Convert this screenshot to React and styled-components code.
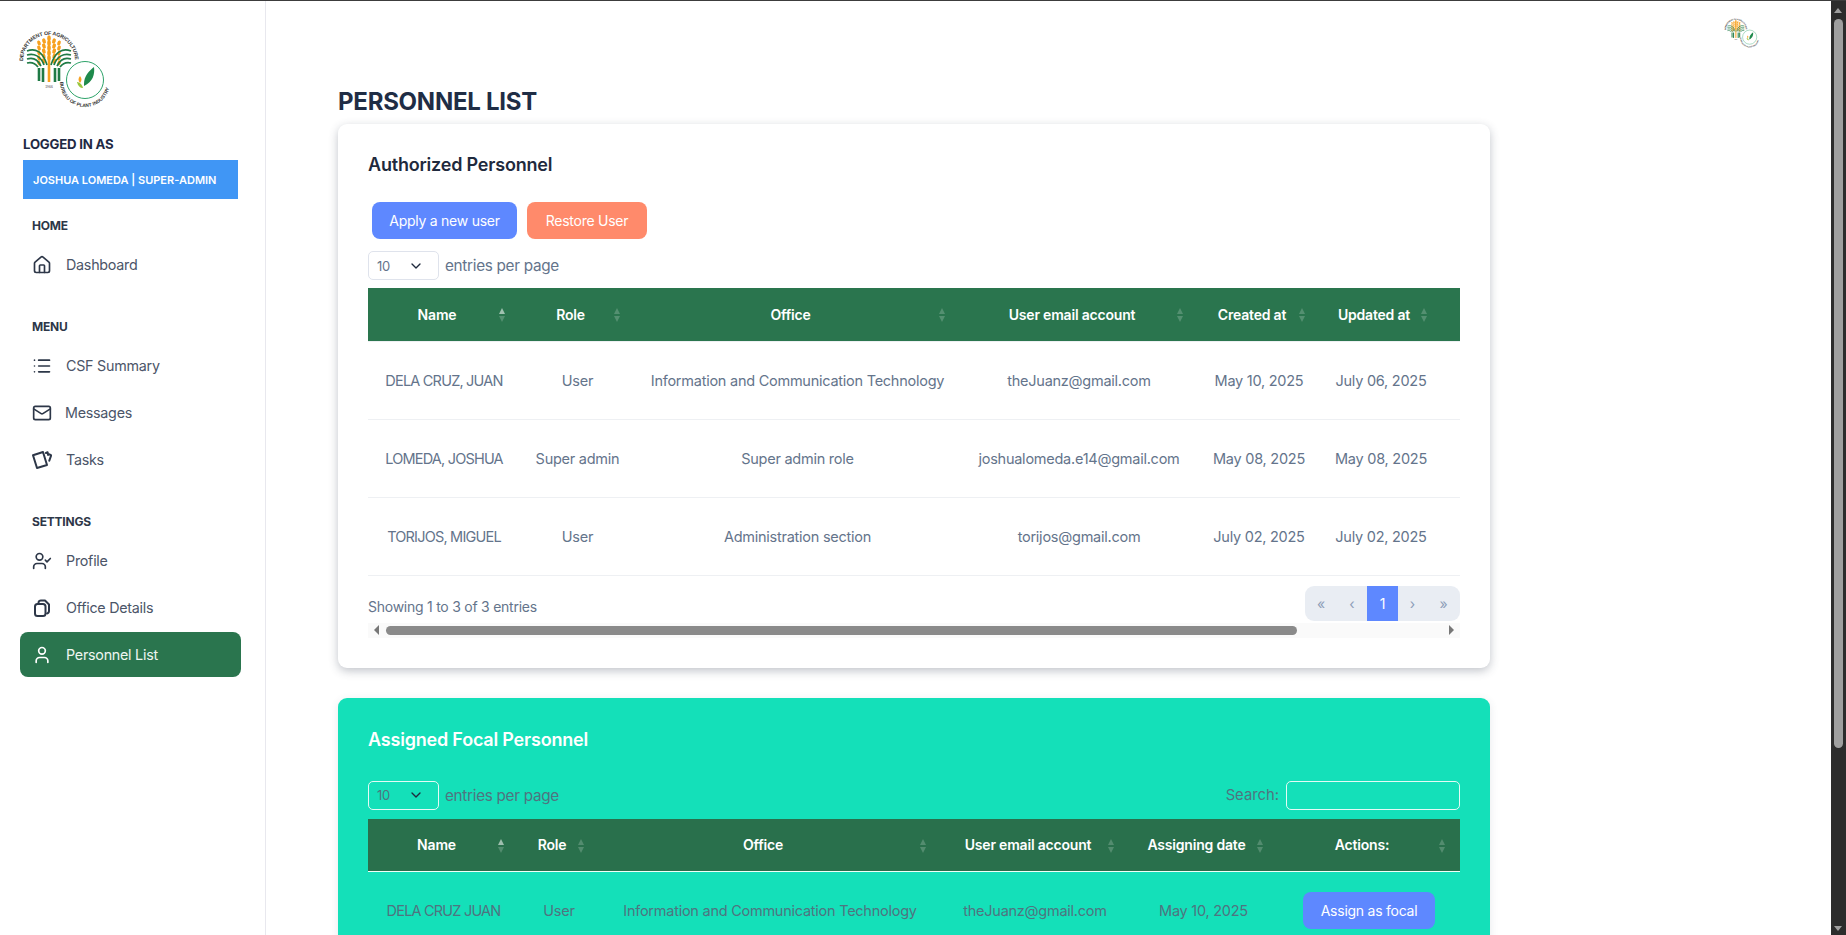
import React from 'react'
import styled, { createGlobalStyle } from 'styled-components'
import { Home, List, Mail, UserCheck, User, ChevronDown } from 'lucide-react'

const GlobalStyle = createGlobalStyle`
  html, body { margin: 0; padding: 0; background: #fff; height: 100%; overflow: hidden; }
  body { font-family: Inter, "Noto Sans", sans-serif; color: #1f2a44; }
  * { box-sizing: border-box; }
`

const Page = styled.div`
  position: relative;
  height: 935px;
  overflow: hidden;
  display: flex;
  border-top: 1px solid #3c3c3c;
`
const Sidebar = styled.aside`
  width: 266px;
  flex: none;
  border-right: 1px solid #e8e8ee;
  padding: 29px 0 0 0;
`
const LogoBox = styled.div`
  padding-left: 18px;
  height: 80px;
`
const LoggedLabel = styled.div`
  margin: 26px 0 0 23px;
  font-size: 13.2px;
  line-height: 16px;
  font-weight: 700;
  letter-spacing: -0.2px;
  color: #1f2a44;
`
const UserBanner = styled.div`
  margin: 8px 0 19px 23px;
  width: 215px;
  height: 39px;
  padding-left: 10px;
  display: flex;
  align-items: center;
  background: #4096f5;
  color: #fff;
  font-size: 11px;
  font-weight: 600;
  white-space: nowrap;
`
const SectionLabel = styled.div`
  margin: ${p => (p.$first ? 0 : '31px')} 0 7px 32px;
  font-size: 12px;
  line-height: 16px;
  font-weight: 700;
  letter-spacing: -0.2px;
  color: #2d3748;
`
const NavItem = styled.div`
  display: flex;
  align-items: center;
  margin: ${p => (p.$active ? '1px' : 0)} 0 ${p => (p.$active ? '1px' : 0)} ${p => (p.$active ? '20px' : 0)};
  width: ${p => (p.$active ? '221px' : 'auto')};
  height: ${p => (p.$active ? '45px' : '47px')};
  padding-left: ${p => (p.$active ? '12px' : '32px')};
  border-radius: 8px;
  background: ${p => (p.$active ? '#2a754e' : 'transparent')};
  color: ${p => (p.$active ? '#eef6f1' : '#4b5568')};
  font-size: 14.3px;
  letter-spacing: -0.25px;
  & > svg { flex: none; color: ${p => (p.$active ? '#fff' : '#2d3748')}; }
`
const NavText = styled.span`
  margin-left: ${p => p.$left || 14}px;
`
const Main = styled.main`
  flex: 1;
  min-width: 0;
  padding-left: 72px;
`
const TopBar = styled.div`
  display: flex;
  justify-content: flex-end;
  padding: 17px 86px 0 0;
  height: 85px;
`
const Title = styled.h1`
  margin: 0 0 6px 0;
  height: 32px;
  line-height: 32px;
  font-size: 24px;
  font-weight: 700;
  letter-spacing: -0.25px;
  color: #1f2d45;
`
const Card = styled.section`
  width: 1152px;
  margin-bottom: 30px;
  padding: 30px;
  border-radius: 9px;
  background: ${p => (p.$teal ? '#14e0b9' : '#fff')};
  box-shadow: ${p => (p.$teal ? '0 2px 8px rgba(60,70,90,.12)' : '0 3px 10px rgba(50,60,80,.3)')};
`
const CardTitle = styled.h2`
  margin: ${p => (p.$light ? '1px' : 0)} 0 0 0;
  height: 22px;
  line-height: 22px;
  font-size: 18px;
  font-weight: 600;
  letter-spacing: -0.2px;
  color: ${p => (p.$light ? '#fff' : '#1f2a3d')};
`
const ButtonRow = styled.div`
  display: flex;
  gap: 10px;
  margin: 26px 0 12px 4px;
`
const ActionButton = styled.button`
  height: 37px;
  width: ${p => p.$w}px;
  padding: 0;
  border: none;
  border-radius: 8px;
  background: ${p => p.$bg || '#5e88ff'};
  color: #fff;
  font-family: inherit;
  font-size: 14px;
  letter-spacing: -0.25px;
`
const Controls = styled.div`
  display: flex;
  align-items: center;
  justify-content: space-between;
  height: 29px;
  margin: ${p => (p.$teal ? '30px 0 9px' : '0 0 8px')};
`
const EntriesGroup = styled.div`
  display: flex;
  align-items: center;
  gap: 6px;
  font-size: 15.3px;
  letter-spacing: -0.3px;
  color: ${p => (p.$teal ? '#4f7480' : '#64748b')};
`
const SelectBox = styled.div`
  width: 71px;
  height: 29px;
  display: flex;
  align-items: center;
  justify-content: space-between;
  padding: 0 14px 0 8px;
  border: 1px solid ${p => (p.$teal ? '#e4fbf6' : '#dfe3ec')};
  border-radius: 5px;
  font-size: 13px;
  color: ${p => (p.$teal ? '#4f7480' : '#64748b')};
  & > svg { color: #1f2a3d; }
`
const SearchGroup = styled.label`
  display: flex;
  align-items: center;
  gap: 7px;
  font-size: 14.8px;
  color: #4f7480;
`
const SearchInput = styled.input`
  width: 174px;
  height: 29px;
  border: 1px solid #e4fbf6;
  border-radius: 5px;
  background: transparent;
  outline: none;
`
const TableClip = styled.div`
  width: 1092px;
  overflow: hidden;
`
const Table = styled.table`
  width: ${p => p.$w}px;
  table-layout: fixed;
  border-collapse: collapse;
`
const Th = styled.th`
  position: relative;
  height: 53px;
  padding: 0 24px 0 10px;
  background: ${p => (p.$teal ? '#29704c' : '#2a754e')};
  border-bottom: 1px solid ${p => (p.$teal ? '#f0fff9' : '#eef0f3')};
  color: #fff;
  font-size: 14px;
  font-weight: 600;
  letter-spacing: -0.2px;
  white-space: nowrap;
  &::before, &::after {
    content: '';
    position: absolute;
    right: 15px;
    width: 0;
    height: 0;
    border-left: 3.5px solid transparent;
    border-right: 3.5px solid transparent;
  }
  &::before {
    top: 20px;
    border-bottom: 6px solid rgba(255, 255, 255, ${p => (p.$sorted ? 0.55 : 0.2)});
  }
  &::after {
    top: 28px;
    border-top: 6px solid rgba(255, 255, 255, 0.2);
  }
`
const ThBlank = styled.th`
  background: #2a754e;
  border-bottom: 1px solid #eef0f3;
`
const Td = styled.td`
  height: 78px;
  padding: 0 4px;
  text-align: center;
  border-bottom: ${p => (p.$teal ? 'none' : '1px solid #eef0f3')};
  color: ${p => (p.$teal ? '#4f7480' : '#64748b')};
  font-size: 14.5px;
  letter-spacing: ${p => (p.$caps ? '-0.8px' : '-0.25px')};
  white-space: nowrap;
`
const TableFooter = styled.div`
  display: flex;
  justify-content: space-between;
  align-items: flex-start;
  margin-top: 10px;
  height: 36px;
`
const ShowingText = styled.div`
  margin-top: 12px;
  font-size: 14px;
  letter-spacing: -0.25px;
  color: #64748b;
`
const Pagination = styled.div`
  display: flex;
  height: 35px;
  border-radius: 9px;
  overflow: hidden;
  background: #e9edf3;
`
const PageCell = styled.div`
  width: ${p => p.$w}px;
  display: flex;
  align-items: center;
  justify-content: center;
  font-size: 14px;
  background: ${p => (p.$active ? '#5e88ff' : 'transparent')};
  color: ${p => (p.$active ? '#fff' : '#8d9db8')};
`
const HScroll = styled.div`
  position: relative;
  height: 15px;
  margin-top: 1px;
  display: flex;
  align-items: center;
  justify-content: space-between;
  padding: 0 6px;
  background: #fafafa;
`
const HThumb = styled.div`
  position: absolute;
  left: 18px;
  top: 3px;
  width: 911px;
  height: 9px;
  border-radius: 5px;
  background: #8a8a8a;
`
const SideArrow = styled.div`
  width: 0;
  height: 0;
  border-top: 5px solid transparent;
  border-bottom: 5px solid transparent;
  ${p => (p.$right ? 'border-left: 5px solid #777;' : 'border-right: 5px solid #777;')}
`
const ScrollBar = styled.div`
  position: absolute;
  top: 0;
  right: 0;
  bottom: 0;
  width: 15px;
  background: #2c2c2c;
`
const ScrollThumb = styled.div`
  position: absolute;
  left: 3px;
  top: 18px;
  width: 9px;
  height: 729px;
  border-radius: 5px;
  background: #9f9f9f;
`
const ScrollArrow = styled.div`
  position: absolute;
  left: 3px;
  width: 0;
  height: 0;
  border-left: 4.5px solid transparent;
  border-right: 4.5px solid transparent;
  ${p => (p.$down
    ? 'bottom: 4px; border-top: 5px solid #9f9f9f;'
    : 'top: 7px; border-bottom: 5px solid #9f9f9f;')}
`

function Logo({ width = 94, id }) {
  const grains = []
  for (let i = 0; i < 5; i++) {
    const y = 11 + i * 5
    const spread = 5 + i * 0.6
    grains.push(<ellipse key={'l2' + i} cx={31 - spread * 2 + i * 1.2} cy={y + 2} rx="1.7" ry="2.6" fill="#f7a11f" transform={`rotate(-20 ${31 - spread * 2 + i * 1.2} ${y + 2})`} />)
    grains.push(<ellipse key={'l' + i} cx={31 - spread + i * 0.5} cy={y} rx="1.8" ry="2.7" fill="#f7a11f" transform={`rotate(-18 ${31 - spread + i * 0.5} ${y})`} />)
    grains.push(<ellipse key={'r' + i} cx={31 + spread - i * 0.5} cy={y} rx="1.8" ry="2.7" fill="#f7a11f" transform={`rotate(18 ${31 + spread - i * 0.5} ${y})`} />)
    grains.push(<ellipse key={'r2' + i} cx={31 + spread * 2 - i * 1.2} cy={y + 2} rx="1.7" ry="2.6" fill="#f7a11f" transform={`rotate(20 ${31 + spread * 2 - i * 1.2} ${y + 2})`} />)
    grains.push(<ellipse key={'c' + i} cx={31} cy={y - 3} rx="1.8" ry="2.7" fill="#f7a11f" />)
  }
  return (
    <svg width={width} height={width * 80 / 94} viewBox="0 0 94 80">
      <defs>
        <path id={id + 'a'} d="M5 31 A26 26 0 0 1 57 31" />
        <path id={id + 'b'} d="M42 52 A25 25 0 0 0 92 52" />
      </defs>
      <text fontFamily="Liberation Sans, sans-serif" fontSize="5.2" fontWeight="700" fill="#333" textLength="80">
        <textPath href={`#${id}a`}>DEPARTMENT OF AGRICULTURE</textPath>
      </text>
      {grains}
      <path d="M31 8v44" stroke="#f7a11f" strokeWidth="2.6" />
      <path d="M9 21c8-3 16 0 20 14M9 25c7-2 14 1 17 10M9 29c6-2 11 1 14 7M9 33c4-1 8 0 11 4M53 21c-8-3-16 0-20 14M53 25c-7-2-14 1-17 10M53 29c-6-2-11 1-14 7M53 33c-4-1-8 0-11 4" fill="none" stroke="#1f7a45" strokeWidth="1.7" />
      <path d="M21 38v13M25 38v14M37 38v14M41 38v13" stroke="#1f7a45" strokeWidth="2.6" />
      <text x="31" y="58" fontSize="3.4" textAnchor="middle" fontFamily="Liberation Sans, sans-serif" fill="#444">1966</text>
      <circle cx="67" cy="50" r="18.5" fill="#fff" stroke="#2ea36a" strokeWidth="1" />
      <path d="M66 65V54C66 46 71 41 76 37c1 7-1 15-10 19z" fill="#1f8a4c" />
      <path d="M62 46c-2 2-2 5 0 7 2-2 2-5 0-7z" fill="#f7a11f" />
      <path d="M59 52c2 0 5 2 6 6-3 0-5-2-6-6z" fill="#9ac63c" />
      <text fontFamily="Liberation Sans, sans-serif" fontSize="4.8" fontWeight="700" fill="#333" textLength="72">
        <textPath href={`#${id}b`}>BUREAU OF PLANT INDUSTRY</textPath>
      </text>
    </svg>
  )
}

function CardsIcon() {
  return (
    <svg width="20" height="20" viewBox="0 0 20 20" fill="none" stroke="currentColor" strokeWidth="2" strokeLinecap="round" strokeLinejoin="round">
      <path d="M1 5.3 11 2l4 13-10 3z" />
      <path d="M14 3l1.6-.8.5 2.8M17.5 4.3l1.7 1-1.9 5.4" />
    </svg>
  )
}

function PagesIcon() {
  return (
    <svg width="20" height="20" viewBox="0 0 20 20" fill="none" stroke="currentColor" strokeWidth="2" strokeLinecap="round" strokeLinejoin="round">
      <rect x="3" y="6" width="10.5" height="12" rx="2.5" />
      <path d="M6.5 4.5A2.5 2.5 0 0 1 9 2.5h4l4 4v6.5a2.5 2.5 0 0 1-2 2.4" />
    </svg>
  )
}

const homeItems = [{ label: 'Dashboard', icon: <Home size={20} strokeWidth={2} /> }]
const menuItems = [
  { label: 'CSF Summary', icon: <List size={20} strokeWidth={2} /> },
  { label: 'Messages', icon: <Mail size={20} strokeWidth={2} />, left: 13 },
  { label: 'Tasks', icon: <CardsIcon />, left: 14 },
]
const settingItems = [
  { label: 'Profile', icon: <UserCheck size={20} strokeWidth={2} /> },
  { label: 'Office Details', icon: <PagesIcon /> },
  { label: 'Personnel List', icon: <User size={20} strokeWidth={2} />, active: true },
]

const authColumns = [
  { title: 'Name', width: 152, sorted: true },
  { title: 'Role', width: 115 },
  { title: 'Office', width: 325 },
  { title: 'User email account', width: 238 },
  { title: 'Created at', width: 122 },
  { title: 'Updated at', width: 122 },
]
const authRows = [
  ['DELA CRUZ, JUAN', 'User', 'Information and Communication Technology', 'theJuanz@gmail.com', 'May 10, 2025', 'July 06, 2025'],
  ['LOMEDA, JOSHUA', 'Super admin', 'Super admin role', 'joshualomeda.e14@gmail.com', 'May 08, 2025', 'May 08, 2025'],
  ['TORIJOS, MIGUEL', 'User', 'Administration section', 'torijos@gmail.com', 'July 02, 2025', 'July 02, 2025'],
]
const focalColumns = [
  { title: 'Name', width: 151, sorted: true },
  { title: 'Role', width: 80 },
  { title: 'Office', width: 342 },
  { title: 'User email account', width: 188 },
  { title: 'Assigning date', width: 149 },
  { title: 'Actions:', width: 182 },
]

function NavGroup({ items }) {
  return items.map(item => (
    <NavItem key={item.label} $active={item.active}>
      {item.icon}
      <NavText $left={item.left}>{item.label}</NavText>
    </NavItem>
  ))
}

function EntriesSelect({ teal }) {
  return (
    <EntriesGroup $teal={teal}>
      <SelectBox $teal={teal}>10<ChevronDown size={16} /></SelectBox>
      entries per page
    </EntriesGroup>
  )
}

export default function App() {
  return (
    <Page>
      <GlobalStyle />
      <Sidebar>
        <LogoBox><Logo id="side" /></LogoBox>
        <LoggedLabel>LOGGED IN AS</LoggedLabel>
        <UserBanner>JOSHUA LOMEDA | SUPER-ADMIN</UserBanner>
        <SectionLabel $first>HOME</SectionLabel>
        <NavGroup items={homeItems} />
        <SectionLabel>MENU</SectionLabel>
        <NavGroup items={menuItems} />
        <SectionLabel>SETTINGS</SectionLabel>
        <NavGroup items={settingItems} />
      </Sidebar>
      <Main>
        <TopBar><Logo id="top" width={36} /></TopBar>
        <Title>PERSONNEL LIST</Title>
        <Card>
          <CardTitle>Authorized Personnel</CardTitle>
          <ButtonRow>
            <ActionButton $w={145}>Apply a new user</ActionButton>
            <ActionButton $w={120} $bg="#ff8a6b">Restore User</ActionButton>
          </ButtonRow>
          <Controls><EntriesSelect /></Controls>
          <TableClip>
            <Table $w={1274}>
              <colgroup>
                {authColumns.map(c => <col key={c.title} width={c.width} />)}
                <col width={200} />
              </colgroup>
              <thead>
                <tr>
                  {authColumns.map(c => <Th key={c.title} $sorted={c.sorted}>{c.title}</Th>)}
                  <ThBlank />
                </tr>
              </thead>
              <tbody>
                {authRows.map(row => (
                  <tr key={row[0]}>
                    {row.map((cell, i) => <Td key={cell} $caps={i === 0}>{cell}</Td>)}
                    <Td />
                  </tr>
                ))}
              </tbody>
            </Table>
          </TableClip>
          <TableFooter>
            <ShowingText>Showing 1 to 3 of 3 entries</ShowingText>
            <Pagination>
              <PageCell $w={32}>«</PageCell>
              <PageCell $w={30}>‹</PageCell>
              <PageCell $w={31} $active>1</PageCell>
              <PageCell $w={29}>›</PageCell>
              <PageCell $w={33}>»</PageCell>
            </Pagination>
          </TableFooter>
          <HScroll>
            <SideArrow />
            <HThumb />
            <SideArrow $right />
          </HScroll>
        </Card>
        <Card $teal>
          <CardTitle $light>Assigned Focal Personnel</CardTitle>
          <Controls $teal>
            <EntriesSelect teal />
            <SearchGroup>Search:<SearchInput /></SearchGroup>
          </Controls>
          <Table $w={1092}>
            <colgroup>
              {focalColumns.map(c => <col key={c.title} width={c.width} />)}
            </colgroup>
            <thead>
              <tr>
                {focalColumns.map(c => <Th key={c.title} $teal $sorted={c.sorted}>{c.title}</Th>)}
              </tr>
            </thead>
            <tbody>
              <tr>
                <Td $teal $caps>DELA CRUZ JUAN</Td>
                <Td $teal>User</Td>
                <Td $teal>Information and Communication Technology</Td>
                <Td $teal>theJuanz@gmail.com</Td>
                <Td $teal>May 10, 2025</Td>
                <Td $teal><ActionButton $w={132}>Assign as focal</ActionButton></Td>
              </tr>
            </tbody>
          </Table>
        </Card>
      </Main>
      <ScrollBar>
        <ScrollArrow />
        <ScrollThumb />
        <ScrollArrow $down />
      </ScrollBar>
    </Page>
  )
}
